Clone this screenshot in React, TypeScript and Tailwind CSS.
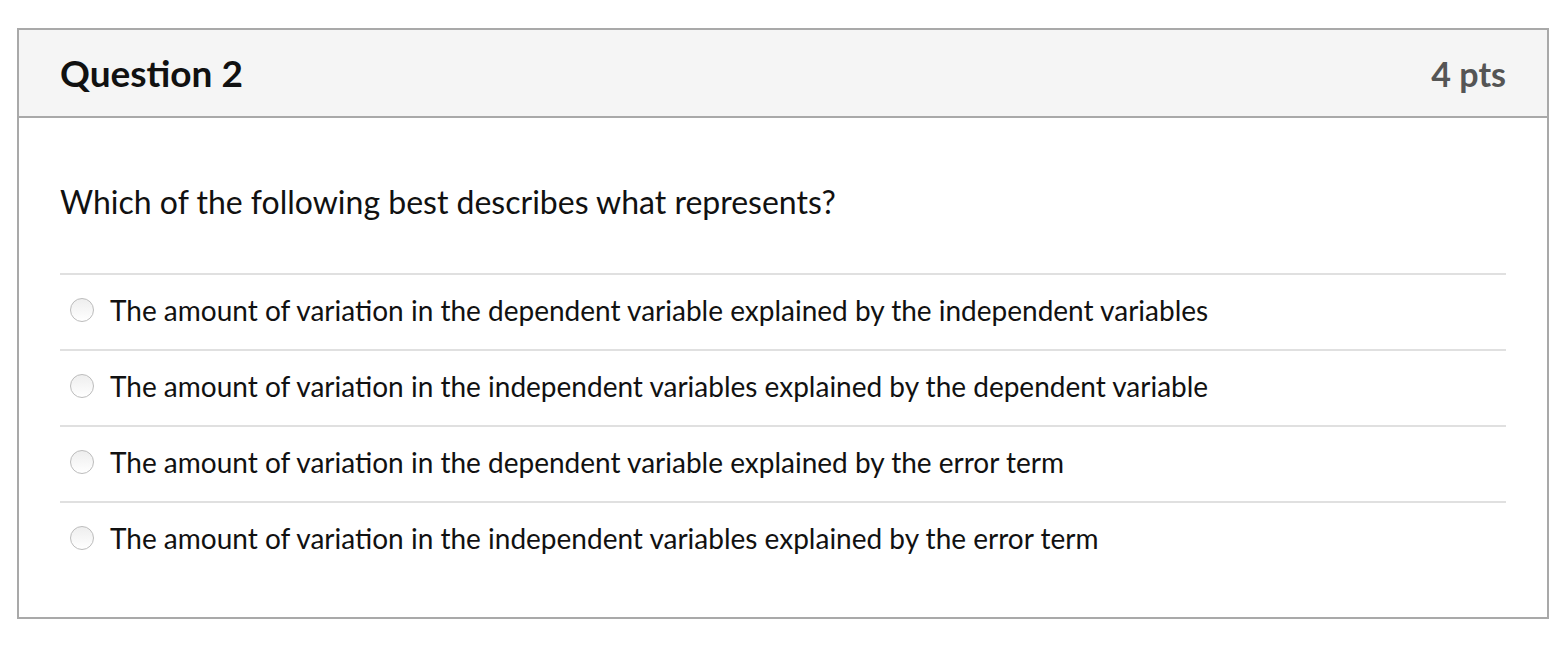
import React from "react";

const options = [
  "The amount of variation in the dependent variable explained by the independent variables",
  "The amount of variation in the independent variables explained by the dependent variable",
  "The amount of variation in the dependent variable explained by the error term",
  "The amount of variation in the independent variables explained by the error term",
];

const Radio = () => (
  <span className="block h-[24px] w-[24px] shrink-0 rounded-full border border-[#bcbcbc] bg-gradient-to-b from-[#eeeeee] to-white" />
);

export default function App() {
  return (
    <div className="min-h-[647px] bg-white pt-[28px] pl-[17px] font-['Lato','Open_Sans',sans-serif] text-[#111]">
      <div className="w-[1532px] h-[591px] border-2 border-[#a9a9a9] box-border">
        <div className="flex h-[88px] items-center justify-between border-b-2 border-[#a9a9a9] bg-[#f5f5f5] px-[41px]">
          <h3 className="text-[37px] font-bold text-[#111]">Question 2</h3>
          <span className="text-[34px] font-bold text-[#555]">4 pts</span>
        </div>
        <div className="px-[41px]">
          <p className="mt-[61px] mb-[48px] text-[32px] leading-[46px]">
            Which of the following best describes what represents?
          </p>
          <ul>
            {options.map((o, i) => (
              <li
                key={i}
                className="flex h-[76px] items-center gap-[16px] border-t-2 border-[#e0e0e0] pb-[4px] pl-[10px]"
              >
                <Radio />
                <span className="text-[28px]">{o}</span>
              </li>
            ))}
          </ul>
        </div>
      </div>
    </div>
  );
}
